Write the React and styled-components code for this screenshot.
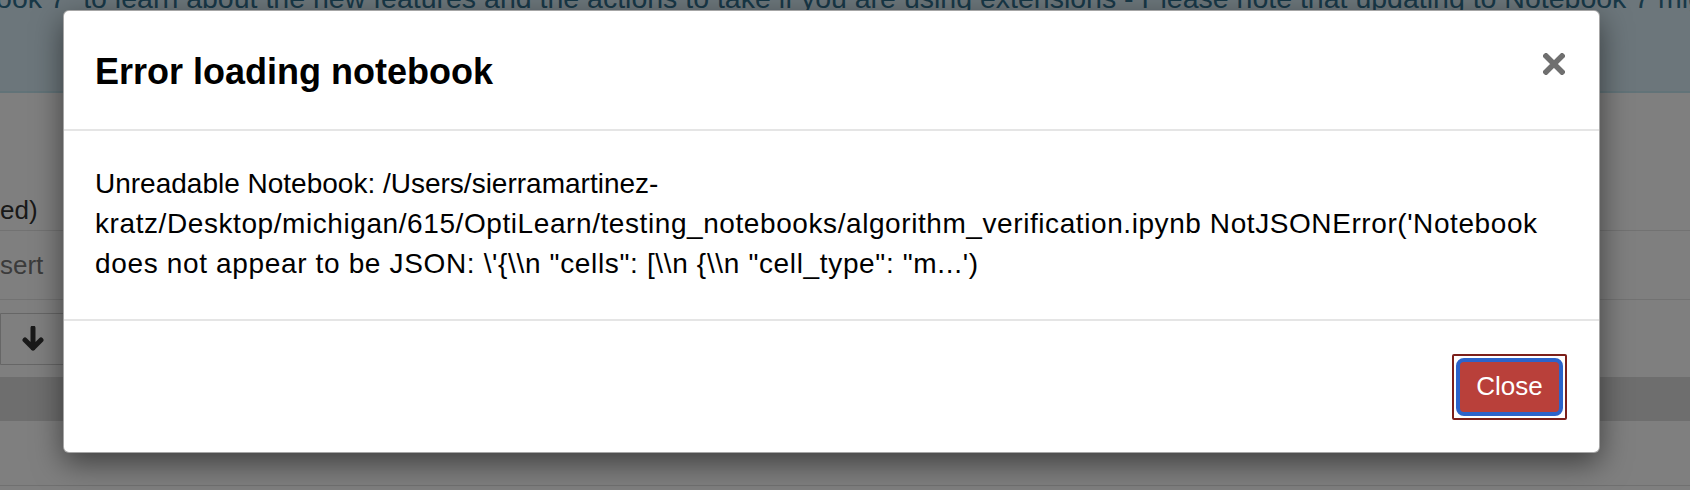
import React from "react";
import styled, { createGlobalStyle } from "styled-components";

const GlobalStyle = createGlobalStyle`
  html, body {
    margin: 0;
    padding: 0;
    background: #ffffff;
  }
  body {
    font-family: "Liberation Sans", Arial, Helvetica, sans-serif;
  }
  * { box-sizing: border-box; }
`;

const Page = styled.div`
  position: relative;
  width: 1690px;
  height: 490px;
  overflow: hidden;
  background: #ffffff;
  font-family: "Liberation Sans", Arial, sans-serif;
`;

const NoticeBar = styled.div`
  height: 93px;
  overflow: hidden;
  background: #d9edf7;
  border-bottom: 2px solid #c4e6f0;
`;

const NoticeText = styled.p`
  margin: -22px 0 0 -80px;
  font-size: 28.5px;
  line-height: 40px;
  color: #31708f;
  white-space: nowrap;
`;

const NotebookArea = styled.div`
  display: flex;
  flex-direction: column;
`;

const MenuRow = styled.div`
  height: ${(p) => p.$height}px;
  padding-top: ${(p) => p.$top}px;
  border-bottom: 1px solid #e4e4e4;
`;

const MenuLabel = styled.span`
  display: block;
  font-size: 26px;
  line-height: 36px;
  color: ${(p) => (p.$muted ? "#777777" : "#333333")};
  white-space: nowrap;
`;

const Toolbar = styled.div`
  height: 77px;
  padding-top: 13px;
  display: flex;
`;

const ToolButton = styled.div`
  width: 110px;
  height: 52px;
  border: 1px solid #cccccc;
  border-radius: 0 4px 4px 0;
  background: #ffffff;
  display: flex;
  align-items: center;
  padding-left: 21px;
`;

const Band = styled.div`
  height: 44px;
  background: #dcdcdc;
`;

const LowerArea = styled.div`
  height: 65px;
  border-bottom: 1px solid #e0e0e0;
`;

const Backdrop = styled.div`
  position: absolute;
  inset: 0;
  background: rgba(0, 0, 0, 0.5);
`;

const Dialog = styled.div`
  position: absolute;
  left: 63px;
  top: 10px;
  width: 1537px;
  background: #ffffff;
  border: 1px solid rgba(0, 0, 0, 0.35);
  border-radius: 6px;
  box-shadow: 0 10px 30px rgba(0, 0, 0, 0.5);
  display: flex;
  flex-direction: column;
`;

const DialogHeader = styled.div`
  display: flex;
  justify-content: space-between;
  align-items: flex-start;
  padding: 35px 34px 32px 31px;
  border-bottom: 2px solid #e5e5e5;
`;

const DialogTitle = styled.h4`
  margin: 0;
  font-size: 36px;
  line-height: 51px;
  font-weight: 700;
  color: #000000;
`;

const CloseX = styled.button`
  margin-top: 7px;
  width: 22px;
  height: 22px;
  padding: 0;
  border: 0;
  background: transparent;
  display: flex;
  cursor: pointer;
`;

const DialogBody = styled.div`
  padding: 33px 30px 35px 31px;
  font-size: 28px;
  line-height: 40px;
  color: #000000;
`;

const BodyLine = styled.span`
  display: block;
  white-space: nowrap;
  letter-spacing: ${(p) => p.$tracking || 0}px;
`;

const DialogFooter = styled.div`
  display: flex;
  justify-content: flex-end;
  padding: 33px 32px 32px 30px;
  border-top: 2px solid #e5e5e5;
`;

const ButtonFrame = styled.button`
  padding: 2px;
  border: 2px solid #7c1f1a;
  border-radius: 2px;
  background: #ffffff;
  display: flex;
  cursor: pointer;
`;

const ButtonFace = styled.span`
  width: 107px;
  height: 58px;
  border: 4px solid #2c63ca;
  border-radius: 8px;
  background: #b9403a;
  color: #ffffff;
  font-family: "Liberation Sans", Arial, sans-serif;
  font-size: 26px;
  line-height: 1;
  display: flex;
  align-items: center;
  justify-content: center;
  padding-bottom: 2px;
`;

const ArrowDownIcon = () => (
  <svg width="22" height="26" viewBox="0 0 22 26" fill="none">
    <path
      d="M11 2 V22 M3 14 L11 22 L19 14"
      stroke="#333333"
      strokeWidth="5"
      strokeLinecap="round"
      strokeLinejoin="round"
    />
  </svg>
);

const CloseIcon = () => (
  <svg width="22" height="22" viewBox="0 0 22 22" fill="none">
    <path
      d="M3 3 L19 19 M19 3 L3 19"
      stroke="#6f6f6f"
      strokeWidth="5.5"
      strokeLinecap="square"
    />
  </svg>
);

export default function App() {
  return (
    <>
      <GlobalStyle />
      <Page>
        <NoticeBar>
          <NoticeText>
            Notebook 7” to learn about the new features and the actions to take if you are using
            extensions - Please note that updating to Notebook 7 might break some of your extensions.
          </NoticeText>
        </NoticeBar>
        <NotebookArea>
          <MenuRow $height={138} $top={99}>
            <MenuLabel>ed)</MenuLabel>
          </MenuRow>
          <MenuRow $height={69} $top={16}>
            <MenuLabel $muted>sert</MenuLabel>
          </MenuRow>
          <Toolbar>
            <ToolButton>
              <ArrowDownIcon />
            </ToolButton>
          </Toolbar>
          <Band />
          <LowerArea />
        </NotebookArea>
        <Backdrop />
        <Dialog role="dialog">
          <DialogHeader>
            <DialogTitle>Error loading notebook</DialogTitle>
            <CloseX aria-label="Close">
              <CloseIcon />
            </CloseX>
          </DialogHeader>
          <DialogBody>
            <BodyLine>Unreadable Notebook: /Users/sierramartinez-</BodyLine>
            <BodyLine $tracking={0.58}>
              kratz/Desktop/michigan/615/OptiLearn/testing_notebooks/algorithm_verification.ipynb
              NotJSONError('Notebook
            </BodyLine>
            <BodyLine $tracking={0.65}>
              does not appear to be JSON: \'{"{"}\\n "cells": [\\n {"{"}\\n "cell_type": "m...')
            </BodyLine>
          </DialogBody>
          <DialogFooter>
            <ButtonFrame>
              <ButtonFace>Close</ButtonFace>
            </ButtonFrame>
          </DialogFooter>
        </Dialog>
      </Page>
    </>
  );
}
